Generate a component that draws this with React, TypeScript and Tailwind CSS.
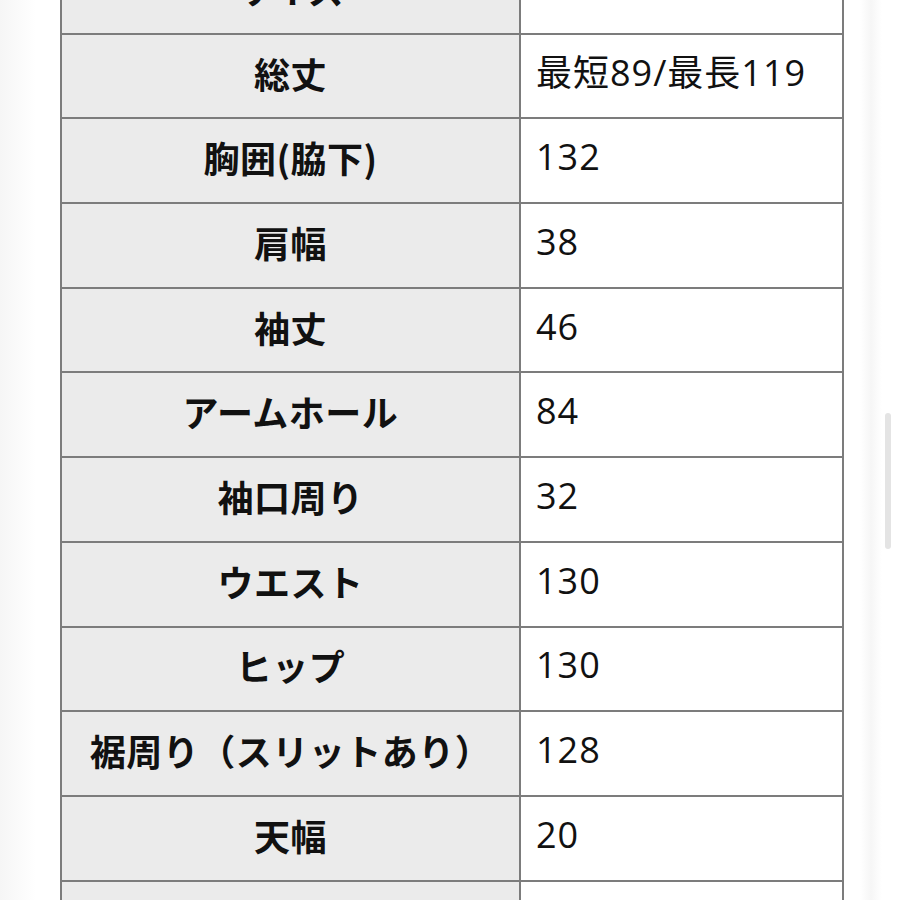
const rows: [string, string][] = [
  ["サイズ", ""],
  ["総丈", "最短89/最長119"],
  ["胸囲(脇下)", "132"],
  ["肩幅", "38"],
  ["袖丈", "46"],
  ["アームホール", "84"],
  ["袖口周り", "32"],
  ["ウエスト", "130"],
  ["ヒップ", "130"],
  ["裾周り（スリットあり）", "128"],
  ["天幅", "20"],
  ["", ""],
];

export default function App() {
  return (
    <div
      className="relative w-[900px] h-[900px] overflow-hidden bg-white flex text-[#111]"
      style={{ fontFamily: '"Noto Sans CJK JP", "Noto Sans", sans-serif' }}
    >
      <div className="w-[36px] shrink-0 bg-gradient-to-r from-[#f6f6f6] to-white" />
      <div className="w-[24px] shrink-0" />
      <div className="mt-[-52px] w-[784px] shrink-0">
        <div className="grid grid-cols-[457px_1fr] gap-[2px] bg-[#7c7c7c] border-2 border-[#7c7c7c]">
          {rows.map(([label, value], i) => (
            <div key={i} className="contents">
              <div className="h-[82.7px] pb-[7px] bg-[#ebebeb] flex items-center justify-center text-[36px] font-semibold tracking-[0.5px] whitespace-nowrap">
                {label}
              </div>
              <div
                className="h-[82.7px] pb-[7px] bg-white flex items-center pl-[15px] text-[36px] tracking-[1px] whitespace-nowrap"
                style={{ fontFamily: '"Open Sans", "Noto Sans CJK JP", sans-serif' }}
              >
                {value}
              </div>
            </div>
          ))}
        </div>
      </div>
      <div className="flex-1 flex">
        <div className="w-[16px]" />
        <div className="w-[22px] bg-gradient-to-r from-white via-[#f6f6f6] to-white" />
      </div>
      <div className="absolute right-[9px] top-[413px] w-[6px] h-[136px] rounded-full bg-[#e4e4e4]" />
    </div>
  );
}
